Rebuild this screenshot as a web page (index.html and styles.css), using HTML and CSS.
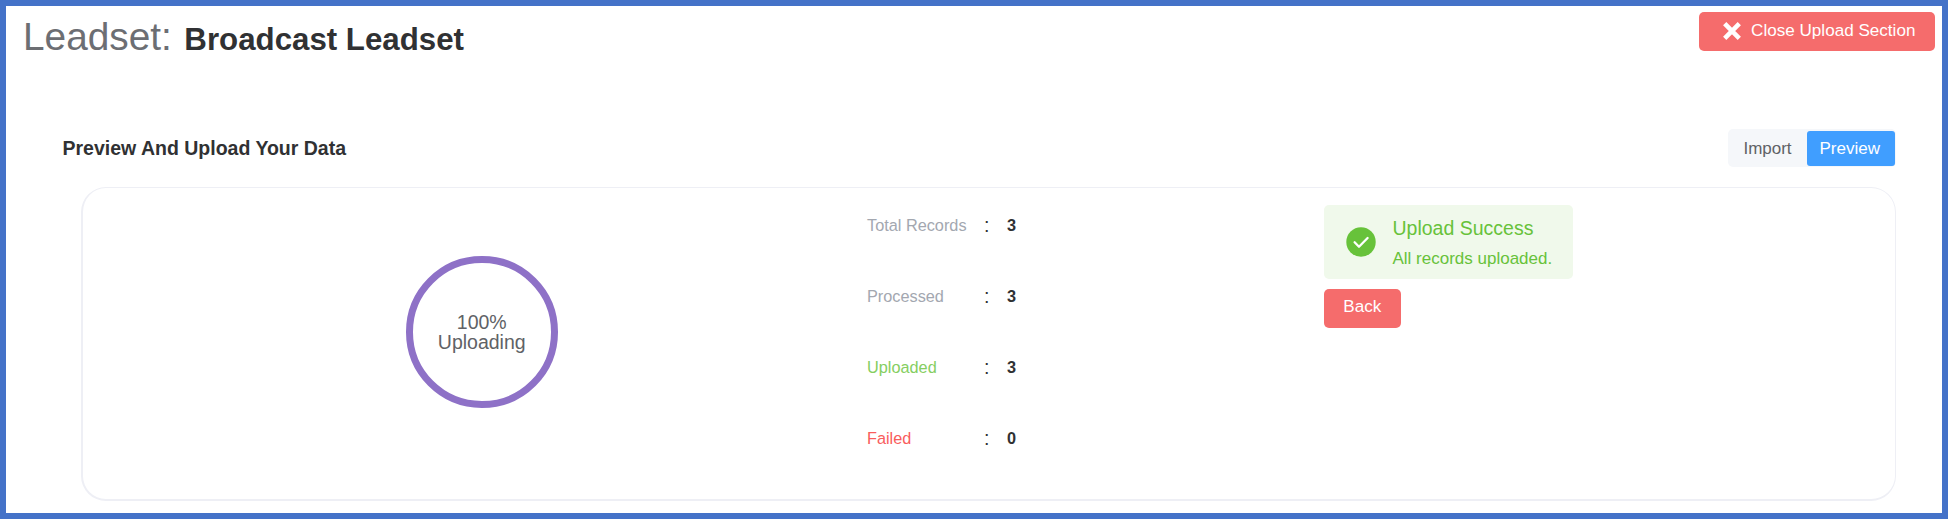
FILE: index.html
```html
<!DOCTYPE html>
<html lang="en">
<head>
<meta charset="utf-8">
<title>Leadset: Broadcast Leadset</title>
<link rel="stylesheet" href="styles.css">
</head>
<body>
<main class="page">
  <header class="topbar">
    <h1 class="title"><span class="title-label">Leadset:</span><span class="title-name">Broadcast Leadset</span></h1>
    <button class="btn btn-close">
      <svg class="close-icon" viewBox="0 0 18 18"><path d="M1.7 1.7 16.3 16.3M16.3 1.7 1.7 16.3" stroke="#fff" stroke-width="4.6" fill="none"/></svg>
      <span>Close Upload Section</span>
    </button>
  </header>
  <section class="section">
    <div class="section-head">
      <h2 class="section-title">Preview And Upload Your Data</h2>
      <nav class="steps"><button class="step">Import</button><button class="step step-active">Preview</button></nav>
    </div>
    <div class="card">
      <div class="progress"><div class="ring"><span>100%</span><span>Uploading</span></div></div>
      <dl class="stats">
        <div class="stat"><dt>Total Records</dt><span class="colon">:</span><dd>3</dd></div>
        <div class="stat"><dt>Processed</dt><span class="colon">:</span><dd>3</dd></div>
        <div class="stat"><dt class="ok">Uploaded</dt><span class="colon">:</span><dd>3</dd></div>
        <div class="stat"><dt class="bad">Failed</dt><span class="colon">:</span><dd>0</dd></div>
      </dl>
      <div class="result">
        <div class="alert">
          <svg class="alert-icon" viewBox="0 0 30 30"><circle cx="15" cy="15" r="14.7" fill="#67c23a"/><path d="M8.6 15.2 13 19.7 21.6 11" fill="none" stroke="#fff" stroke-width="2.3" stroke-linecap="round" stroke-linejoin="round"/></svg>
          <div class="alert-text">
            <div class="alert-title">Upload Success</div>
            <div class="alert-desc">All records uploaded.</div>
          </div>
        </div>
        <button class="btn btn-back">Back</button>
      </div>
    </div>
  </section>
</main>
</body>
</html>
```
FILE: styles.css
```css
* { box-sizing: border-box; }
body {
  margin: 0;
  font-family: "Liberation Sans", Arial, sans-serif;
  color: #303133;
  background: #fff;
}
h1, h2, dl, dt, dd { margin: 0; font-weight: normal; }
button { font-family: inherit; border: 0; margin: 0; padding: 0; white-space: nowrap; }

.page {
  width: 1948px;
  height: 519px;
  border: 6px solid #4472c8;
  overflow: hidden;
}
.topbar {
  display: flex;
  justify-content: space-between;
  align-items: flex-start;
  height: 123px;
  padding: 6px 7.5px 0 17px;
}
.title {
  display: flex;
  align-items: baseline;
  gap: 12.5px;
  padding-top: 1px;
  line-height: 48px;
  white-space: nowrap;
}
.title-label { font-size: 38.8px; color: #6c6e73; }
.title-name { font-size: 31.25px; font-weight: bold; }

.btn {
  display: flex;
  align-items: center;
  justify-content: center;
  background: #f56c6c;
  color: #fff;
  border-radius: 5px;
  font-size: 17.1px;
  line-height: 24px;
}
.btn-close { width: 235.5px; height: 39px; gap: 10px; padding-bottom: 1px; padding-left: 5px; }
.close-icon { width: 18px; height: 18px; }

.section { padding: 0 46px 0 56px; }
.section-head {
  display: flex;
  justify-content: space-between;
  align-items: center;
  height: 38px;
}
.section-title { padding-left: 0.5px; font-size: 19.5px; line-height: 38px; font-weight: bold; }
.steps {
  display: flex;
  align-items: center;
  height: 38px;
  width: 168px;
  padding: 1px 1.5px 0 0;
  background: #f5f7fa;
  border-radius: 5px;
}
.step {
  width: 79px;
  height: 34.5px;
  background: transparent;
  color: #606266;
  font-size: 17px;
  border-radius: 3px;
}
.step-active { width: 87.5px; padding-right: 2px; background: #409eff; color: #fff; }

.card {
  display: grid;
  grid-template-columns: 784px 457px 1fr;
  height: 314px;
  margin: 20px 0 0 19px;
  border: 2px solid #eeeff5;
  border-top-width: 1px;
  border-right-width: 1px;
  border-radius: 25px;
}
.progress { display: flex; padding: 68px 0 0 323px; }
.ring {
  display: flex;
  flex-direction: column;
  align-items: center;
  justify-content: center;
  width: 151.5px;
  height: 151.5px;
  border: 7px solid #8e71c7;
  border-radius: 50%;
  color: #606266;
  font-size: 19.5px;
  line-height: 20px;
}
.stats { padding-top: 19px; }
.stat { display: grid; grid-template-columns: 117px 23px 1fr; height: 71px; font-size: 16.3px; line-height: 36px; }
.stat dt { color: #a3a7b0; }
.stat .ok { color: #85ce61; }
.stat .bad { color: #f95c5c; }
.stat dd { font-weight: bold; }
.colon { font-size: 19.6px; }

.result { padding-top: 17px; }
.alert {
  display: flex;
  align-items: center;
  width: 248.5px;
  height: 74px;
  padding-left: 21.5px;
  background: #f0f9eb;
  border-radius: 5px;
  color: #67c23a;
  gap: 17px;
}
.alert-icon { width: 30px; height: 30px; }
.alert-text { padding-top: 2px; }
.alert-title { font-size: 19.5px; line-height: 30px; }
.alert-desc { font-size: 17px; line-height: 28px; padding-top: 2px; }
.btn-back { width: 76.5px; height: 38.5px; margin-top: 10px; padding-bottom: 2px; }
```
